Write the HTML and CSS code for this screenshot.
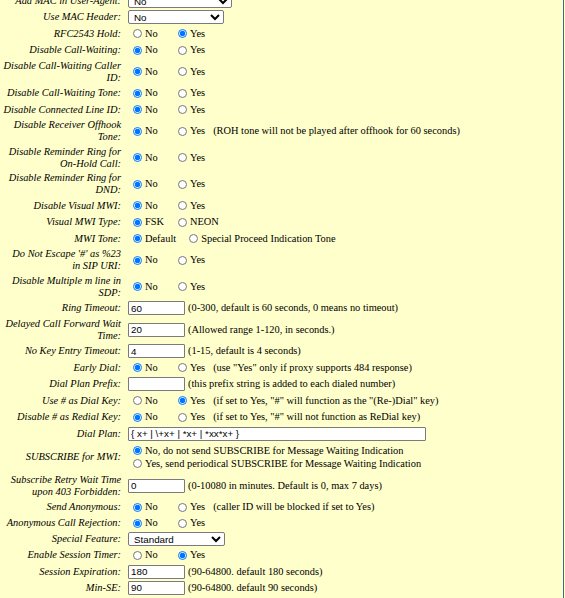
FILE: index.html
```html
<!DOCTYPE html>
<html>
<head>
<meta charset="utf-8">
<link rel="stylesheet" href="styles.css">
</head>
<body>
<div class="page">
<div class="form">
  <div class="row"><div class="lbl">Add MAC in User-Agent:</div><div class="val"><select class="sel sel-mac"><option>No</option></select></div></div>
  <div class="row"><div class="lbl">Use MAC Header:</div><div class="val"><select class="sel sel-hdr"><option>No</option></select></div></div>
  <div class="row"><div class="lbl">RFC2543 Hold:</div><div class="val"><label class="opt"><input class="radio" type="radio" name="r1">No</label><label class="opt"><input class="radio" type="radio" name="r1" checked>Yes</label></div></div>
  <div class="row"><div class="lbl">Disable Call-Waiting:</div><div class="val"><label class="opt"><input class="radio" type="radio" name="r2" checked>No</label><label class="opt"><input class="radio" type="radio" name="r2">Yes</label></div></div>
  <div class="row two"><div class="lbl">Disable Call-Waiting Caller<br>ID:</div><div class="val"><label class="opt"><input class="radio" type="radio" name="r3" checked>No</label><label class="opt"><input class="radio" type="radio" name="r3">Yes</label></div></div>
  <div class="row"><div class="lbl">Disable Call-Waiting Tone:</div><div class="val"><label class="opt"><input class="radio" type="radio" name="r4" checked>No</label><label class="opt"><input class="radio" type="radio" name="r4">Yes</label></div></div>
  <div class="row"><div class="lbl">Disable Connected Line ID:</div><div class="val"><label class="opt"><input class="radio" type="radio" name="r5" checked>No</label><label class="opt"><input class="radio" type="radio" name="r5">Yes</label></div></div>
  <div class="row two"><div class="lbl">Disable Receiver Offhook<br>Tone:</div><div class="val"><label class="opt"><input class="radio" type="radio" name="r6" checked>No</label><label class="opt"><input class="radio" type="radio" name="r6">Yes</label><span class="note">(ROH tone will not be played after offhook for 60 seconds)</span></div></div>
  <div class="row two"><div class="lbl">Disable Reminder Ring for<br>On-Hold Call:</div><div class="val"><label class="opt"><input class="radio" type="radio" name="r7" checked>No</label><label class="opt"><input class="radio" type="radio" name="r7">Yes</label></div></div>
  <div class="row two"><div class="lbl">Disable Reminder Ring for<br>DND:</div><div class="val"><label class="opt"><input class="radio" type="radio" name="r8" checked>No</label><label class="opt"><input class="radio" type="radio" name="r8">Yes</label></div></div>
  <div class="row"><div class="lbl">Disable Visual MWI:</div><div class="val"><label class="opt"><input class="radio" type="radio" name="r9" checked>No</label><label class="opt"><input class="radio" type="radio" name="r9">Yes</label></div></div>
  <div class="row"><div class="lbl">Visual MWI Type:</div><div class="val"><label class="opt"><input class="radio" type="radio" name="r10" checked>FSK</label><label class="opt"><input class="radio" type="radio" name="r10">NEON</label></div></div>
  <div class="row"><div class="lbl">MWI Tone:</div><div class="val"><label class="opt"><input class="radio" type="radio" name="r11" checked>Default</label><label class="opt"><input class="radio" type="radio" name="r11">Special Proceed Indication Tone</label></div></div>
  <div class="row two"><div class="lbl">Do Not Escape '#' as %23<br>in SIP URI:</div><div class="val"><label class="opt"><input class="radio" type="radio" name="r12" checked>No</label><label class="opt"><input class="radio" type="radio" name="r12">Yes</label></div></div>
  <div class="row two"><div class="lbl">Disable Multiple m line in<br>SDP:</div><div class="val"><label class="opt"><input class="radio" type="radio" name="r13" checked>No</label><label class="opt"><input class="radio" type="radio" name="r13">Yes</label></div></div>
  <div class="row"><div class="lbl">Ring Timeout:</div><div class="val"><input class="txt" type="text" value="60"><span>(0-300, default is 60 seconds, 0 means no timeout)</span></div></div>
  <div class="row two"><div class="lbl">Delayed Call Forward Wait<br>Time:</div><div class="val"><input class="txt" type="text" value="20"><span>(Allowed range 1-120, in seconds.)</span></div></div>
  <div class="row"><div class="lbl">No Key Entry Timeout:</div><div class="val"><input class="txt" type="text" value="4"><span>(1-15, default is 4 seconds)</span></div></div>
  <div class="row"><div class="lbl">Early Dial:</div><div class="val"><label class="opt"><input class="radio" type="radio" name="r14" checked>No</label><label class="opt"><input class="radio" type="radio" name="r14">Yes</label><span class="note">(use "Yes" only if proxy supports 484 response)</span></div></div>
  <div class="row"><div class="lbl">Dial Plan Prefix:</div><div class="val"><input class="txt" type="text" value=""><span>(this prefix string is added to each dialed number)</span></div></div>
  <div class="row"><div class="lbl">Use # as Dial Key:</div><div class="val"><label class="opt"><input class="radio" type="radio" name="r15">No</label><label class="opt"><input class="radio" type="radio" name="r15" checked>Yes</label><span class="note">(if set to Yes, "#" will function as the "(Re-)Dial" key)</span></div></div>
  <div class="row"><div class="lbl">Disable # as Redial Key:</div><div class="val"><label class="opt"><input class="radio" type="radio" name="r16" checked>No</label><label class="opt"><input class="radio" type="radio" name="r16">Yes</label><span class="note">(if set to Yes, "#" will not function as ReDial key)</span></div></div>
  <div class="row"><div class="lbl">Dial Plan:</div><div class="val"><input class="txt txt-wide" type="text" value="{ x+ | \+x+ | *x+ | *xx*x+ }"></div></div>
  <div class="row sub"><div class="lbl">SUBSCRIBE for MWI:</div><div class="val stack"><label class="line"><input class="radio" type="radio" name="r17" checked>No, do not send SUBSCRIBE for Message Waiting Indication</label><label class="line"><input class="radio" type="radio" name="r17">Yes, send periodical SUBSCRIBE for Message Waiting Indication</label></div></div>
  <div class="row two"><div class="lbl">Subscribe Retry Wait Time<br>upon 403 Forbidden:</div><div class="val"><input class="txt" type="text" value="0"><span>(0-10080 in minutes. Default is 0, max 7 days)</span></div></div>
  <div class="row"><div class="lbl">Send Anonymous:</div><div class="val"><label class="opt"><input class="radio" type="radio" name="r18" checked>No</label><label class="opt"><input class="radio" type="radio" name="r18">Yes</label><span class="note">(caller ID will be blocked if set to Yes)</span></div></div>
  <div class="row tight"><div class="lbl">Anonymous Call Rejection:</div><div class="val"><label class="opt"><input class="radio" type="radio" name="r19" checked>No</label><label class="opt"><input class="radio" type="radio" name="r19">Yes</label></div></div>
  <div class="row tight"><div class="lbl">Special Feature:</div><div class="val"><select class="sel sel-std"><option>Standard</option></select></div></div>
  <div class="row tight"><div class="lbl">Enable Session Timer:</div><div class="val"><label class="opt"><input class="radio" type="radio" name="r20">No</label><label class="opt"><input class="radio" type="radio" name="r20" checked>Yes</label></div></div>
  <div class="row tight"><div class="lbl">Session Expiration:</div><div class="val"><input class="txt" type="text" value="180"><span>(90-64800. default 180 seconds)</span></div></div>
  <div class="row tight"><div class="lbl">Min-SE:</div><div class="val"><input class="txt" type="text" value="90"><span>(90-64800. default 90 seconds)</span></div></div>
</div>
</div>
</body>
</html>
```

FILE: styles.css
```css
html, body {
  margin: 0;
  padding: 0;
  height: 598px;
  overflow: hidden;
}

body {
  background: #ffffcc;
  color: #000;
  font-family: "Liberation Serif", "Times New Roman", serif;
  font-size: 10.4px;
}

.page {
  width: 564px;
  height: 598px;
  box-sizing: border-box;
  border-right: 1px solid #3f6a8e;
  overflow: hidden;
}

.form {
  margin-top: -7.75px;
  padding-left: 2px;
}

.row {
  display: flex;
  align-items: center;
  min-height: 16.5px;
}

.row.two {
  min-height: 26.5px;
}

.row.sub {
  min-height: 30.5px;
}

.row.tight {
  min-height: 16.1px;
}

.lbl {
  flex: 0 0 119px;
  text-align: right;
  font-style: italic;
  line-height: 12px;
  white-space: nowrap;
}

.val {
  margin-left: 7px;
  display: flex;
  align-items: center;
  white-space: nowrap;
  line-height: 12px;
}

.val.stack {
  flex-direction: column;
  align-items: flex-start;
}

.line {
  display: flex;
  align-items: center;
  height: 13px;
}

.opt {
  display: inline-flex;
  align-items: center;
  padding-right: 8px;
}

.opt:first-child {
  min-width: 45px;
  box-sizing: border-box;
}

.radio {
  width: 9px;
  height: 9px;
  margin: 0 3px 0 5px;
}

.txt {
  box-sizing: border-box;
  width: 57px;
  height: 14px;
  margin: 0 3px 0 0;
  padding: 0 2px;
  border: 1px solid #7a7a7a;
  border-radius: 1px;
  background: #fff;
  font-family: "Liberation Sans", Arial, sans-serif;
  font-size: 9.8px;
  color: #000;
}

.txt-wide {
  width: 298px;
}

.sel {
  box-sizing: border-box;
  height: 14px;
  margin: 0;
  padding: 0 0 0 1px;
  border: 1px solid #7a7a7a;
  border-radius: 2px;
  background: #fff;
  font-family: "Liberation Sans", Arial, sans-serif;
  font-size: 9.8px;
  color: #000;
}

.sel-mac {
  width: 104px;
}

.sel-hdr {
  width: 96px;
}

.sel-std {
  width: 97px;
}
```
